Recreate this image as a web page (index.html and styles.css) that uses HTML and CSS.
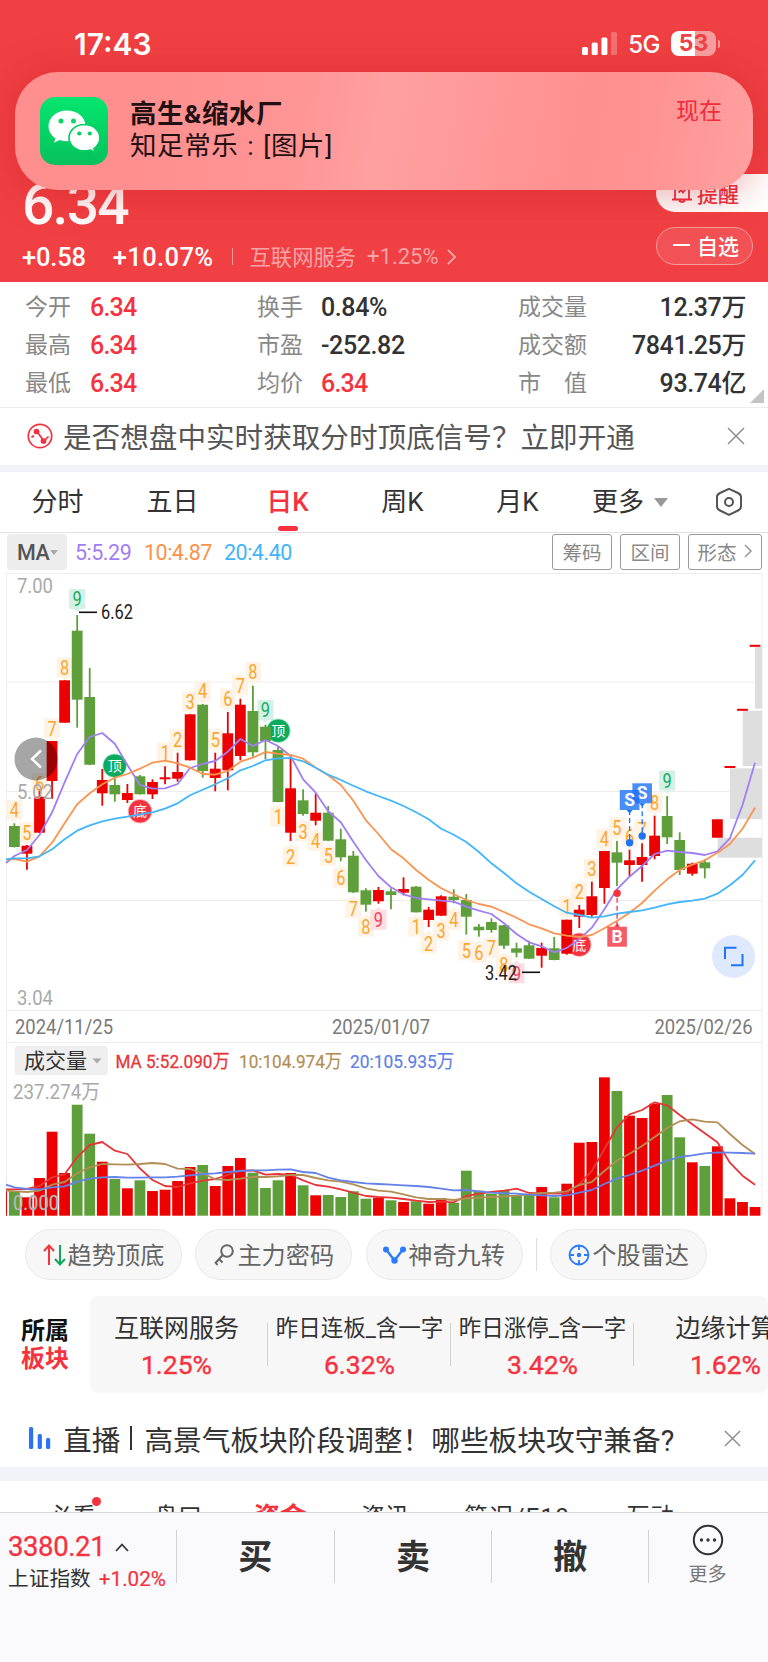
FILE: index.html
```html
<!DOCTYPE html>
<html lang="zh-CN">
<head>
<meta charset="utf-8">
<title>行情</title>
<link rel="stylesheet" href="styles.css">
</head>
<body>
<div class="page">
  <header class="top">
    <div class="status">
      <span class="clock">17:43</span>
      <span class="status-right">
        <svg class="signal" width="36" height="23" viewBox="0 0 36 23"><g fill="#fff"><rect x="0" y="15" width="6" height="8" rx="1.6"/><rect x="9.7" y="10.5" width="6" height="12.5" rx="1.6"/><rect x="19.4" y="5.5" width="6" height="17.5" rx="1.6"/><rect x="29" y="0" width="6" height="23" rx="1.6" opacity=".25"/></g></svg>
        <span class="net">5G</span>
        <span class="battery"><span class="b1">5</span><span class="b2">3</span></span><i class="cap"></i>
      </span>
    </div>
    <div class="quote">
      <div class="quote-main">
        <div class="price">6.34</div>
        <div class="change"><b>+0.58</b><b class="pct">+10.07%</b><i></i><span class="ind">互联网服务</span><span class="ind-pct">+1.25%</span>
          <svg width="10" height="16" viewBox="0 0 10 16" fill="none" stroke="#f8a3a5" stroke-width="1.8"><path d="M1 1l7 7-7 7"/></svg></div>
      </div>
      <div class="quote-btns">
        <div class="remind"><svg width="22" height="22" viewBox="0 0 22 22" fill="none" stroke="#ea2f3f" stroke-width="1.8"><path d="M1 17.5h20M4 17V9.500a7 7 0 0 1 14 0V17M8 18.500q3 3 6 0M7.500 10.500l2.500-2.500 2 2.500 3-4"/></svg>提醒</div>
        <div class="fav"><i></i>自选</div>
      </div>
    </div>
    <div class="notice">
      <svg class="wx" width="68" height="68" viewBox="0 0 68 68"><defs><linearGradient id="wg" x2="0" y2="1"><stop stop-color="#03e66f"/><stop offset="1" stop-color="#07c15c"/></linearGradient></defs><rect width="68" height="68" rx="15" fill="url(#wg)"/>
        <path d="M27 13.500C16.500 13.500 8.500 20.500 8.500 29.300c0 5 2.700 9.200 7 12.100L13.800 45.800l6-2.700c2.300.8 4.700 1.200 7.200 1.200 10.300 0 18.500-6.800 18.500-15.400S37.300 13.500 27 13.500z" fill="#fff"/><circle cx="21" cy="24" r="2.500" fill="#05d667"/><circle cx="33.500" cy="24" r="2.500" fill="#05d667"/>
        <path d="M44.500 27.500c-8.700 0-15.500 5.900-15.500 13.200s6.800 13.200 15.500 13.200c2 0 3.900-.3 5.700-.9l5 2.500-1.300-3.900c3.700-2.500 6-6.400 6-10.900 0-7.300-6.700-13.200-15.400-13.200z" fill="#fff" stroke="#06cf63" stroke-width="1.700"/><circle cx="39.300" cy="36.500" r="2.100" fill="#06cf63"/><circle cx="49.800" cy="36.500" r="2.100" fill="#06cf63"/></svg>
      <div class="msg"><div class="msg-title">高生&amp;缩水厂</div><div class="msg-text">知足常乐 : [图片]</div></div>
      <div class="now">现在</div>
    </div>
  </header>

  <section class="stats">
    <span class="k">今开</span><span class="v red">6.34</span><span class="k">换手</span><span class="v">0.84%</span><span class="k">成交量</span><span class="v r">12.37万</span>
    <span class="k">最高</span><span class="v red">6.34</span><span class="k">市盈</span><span class="v">-252.82</span><span class="k">成交额</span><span class="v r">7841.25万</span>
    <span class="k">最低</span><span class="v red">6.34</span><span class="k">均价</span><span class="v red">6.34</span><span class="k">市　值</span><span class="v r">93.74亿</span>
    <i class="corner"></i>
  </section>

  <section class="promo">
    <svg class="promo-ic" width="26" height="26" viewBox="0 0 26 26" fill="none" stroke="#f2303f" stroke-width="1.700"><circle cx="13" cy="13" r="11.700"/><path d="M4.500 14.500l2.500-2M10.500 9l5.500 8M18 17l3.500-3.500"/><circle cx="9.500" cy="8.500" r="2" fill="#f2303f"/><circle cx="16.500" cy="18" r="2" fill="#f2303f"/></svg>
    <span class="promo-t">是否想盘中实时获取分时顶底信号？立即开通</span>
    <svg class="x" width="18" height="18" viewBox="0 0 18 18" stroke="#8d8d8d" stroke-width="1.500"><path d="M1 1l16 16M17 1L1 17"/></svg>
  </section>

  <nav class="tabs">
    <span>分时</span><span>五日</span><span class="on">日K</span><span>周K</span><span>月K</span>
    <span class="more">更多<i></i></span>
    <svg width="28" height="30" viewBox="0 0 28 30" fill="none" stroke="#555" stroke-width="2"><path d="M14 1.800L23 6q3 1.500 3 4v9.500q0 2.500-3 4L14 28 5 23.500q-3-1.500-3-4V10q0-2.500 3-4z"/><circle cx="14" cy="15" r="4"/></svg>
  </nav>

  <div class="ma">
    <span class="ma-sel">MA<i></i></span><span class="m5">5:5.29</span><span class="m10">10:4.87</span><span class="m20">20:4.40</span>
    <span class="btns"><span class="btn">筹码</span><span class="btn">区间</span><span class="btn w">形态<svg width="9" height="14" viewBox="0 0 9 14" fill="none" stroke="#999" stroke-width="1.500"><path d="M1 1l6 6-6 6"/></svg></span></span>
  </div>

  <svg id="chart" class="chart" width="768" height="647" viewBox="0 570 768 647"></svg>

  <div class="tools">
    <span class="pill"><svg width="23" height="24" viewBox="0 0 23 24" fill="none" stroke-width="2"><path d="M6 22V3M1 8l5-5.500L11 8" stroke="#f5333f"/><path d="M17 2v19M12 16l5 5.500 5-5.500" stroke="#12a85c"/></svg><span>趋势顶底</span></span>
    <span class="pill"><svg width="22" height="24" viewBox="0 0 22 24" fill="none" stroke="#666" stroke-width="2"><circle cx="14" cy="8" r="5.800"/><path d="M9.800 12L2 20.500M6 16l3.500 3.500M2.500 19.500l2 2.500"/></svg><span>主力密码</span></span>
    <span class="pill"><svg width="23" height="24" viewBox="0 0 23 24" fill="none" stroke="#2b7bff" stroke-width="2.300"><path d="M3.500 7l8 10.500 8-10.500"/><g fill="#2b7bff" stroke="none"><circle cx="3" cy="6.500" r="3"/><circle cx="20" cy="6.500" r="3"/><circle cx="11.500" cy="17.500" r="3.200"/></g></svg><span>神奇九转</span></span>
    <i></i>
    <span class="pill"><svg width="22" height="24" viewBox="0 0 22 24" fill="none" stroke="#2b7bff" stroke-width="1.800"><circle cx="11" cy="12" r="9.500"/><path d="M11 2v5M11 17v5M1 12h5M16 12h5"/><circle cx="11" cy="12" r="1.300" fill="#2b7bff"/></svg><span>个股雷达</span></span>
  </div>

  <section class="sector">
    <div class="sector-t"><span>所属</span><span class="red">板块</span></div>
    <div class="cells"><div class="row">
      <div class="cell"><span>互联网服务</span><b>1.25%</b></div>
      <div class="cell sm"><span>昨日连板_含一字</span><b>6.32%</b></div>
      <div class="cell sm"><span>昨日涨停_含一字</span><b>3.42%</b></div>
      <div class="cell"><span>边缘计算</span><b>1.62%</b></div>
    </div></div>
  </section>

  <section class="live">
    <svg width="22" height="22" viewBox="0 0 22 22" fill="#2b72f6"><rect x="0" y="0" width="4.200" height="22" rx="1.500"/><rect x="8.700" y="7" width="4.200" height="15" rx="1.500"/><rect x="17" y="11" width="4.200" height="11" rx="1.500"/></svg>
    <span class="live-t">直播<i></i>高景气板块阶段调整！哪些板块攻守兼备?</span>
    <svg class="x" width="17" height="17" viewBox="0 0 18 18" stroke="#8d8d8d" stroke-width="1.500"><path d="M1 1l16 16M17 1L1 17"/></svg>
  </section>

  <nav class="subtabs"><span class="dot">必看</span><span>盘口</span><span class="on">资金</span><span>资讯</span><span class="wide">简况/F10</span><span>互动</span></nav>

  <footer class="bar">
    <div class="index"><div class="idx-v">3380.21<svg width="14" height="9" viewBox="0 0 14 9" fill="none" stroke="#333" stroke-width="1.800"><path d="M1 8l6-6.500L13 8"/></svg></div><div class="idx-n">上证指数<b>+1.02%</b></div></div>
    <div class="act">买</div><div class="act">卖</div><div class="act">撤</div>
    <div class="moreb"><svg width="32" height="32" viewBox="0 0 32 32" fill="none" stroke="#333" stroke-width="2"><circle cx="16" cy="16" r="14.200"/><g fill="#333" stroke="none"><circle cx="9.500" cy="16" r="1.700"/><circle cx="16" cy="16" r="1.700"/><circle cx="22.500" cy="16" r="1.700"/></g></svg><span>更多</span></div>
  </footer>
</div>
<script src="chart.js"></script>
</body>
</html>
```
FILE: styles.css
```css
* { box-sizing: border-box; }
body { margin: 0; background: #fff; }
i { font-style: normal; display: block; flex: none; }
svg { display: block; flex: none; }
.page {
  width: 768px; height: 1662px; overflow: hidden; color: #333;
  font-family: Roboto, "Noto Sans CJK SC", sans-serif; white-space: nowrap;
  display: flex; flex-direction: column;
}
.page > * { flex: none; }
.red { color: #f5333f; }

.top { height: 282px; background: #f04043; color: #fff; position: relative; overflow: hidden; }
.status { height: 88px; display: flex; justify-content: space-between; padding: 0 48px 0 74px; font-family: Inter, sans-serif; position: relative; z-index: 1; }
.clock { font-size: 30px; font-weight: 600; line-height: 88px; letter-spacing: 0; }
.status-right { display: flex; align-items: center; height: 87px; }
.net { font-size: 24px; font-weight: 500; margin: 2px 11px 0 10px; letter-spacing: -0.5px; }
.battery { width: 45px; height: 25px; border-radius: 8px; display: flex; justify-content: center; font-size: 23px; font-weight: 700; line-height: 25px; color: #ee4145; background: linear-gradient(90deg, #fff 53%, #f69c9d 53%); }
.cap { width: 2px; height: 8px; margin-left: 2px; border-radius: 0 3px 3px 0; background: #f69c9d; }
.quote { display: flex; justify-content: space-between; height: 194px; }
.quote-main { padding: 87px 0 0 22px; }
.price { font-size: 57px; font-weight: 500; line-height: 60px; letter-spacing: -1.8px; }
.change { display: flex; align-items: center; height: 43px; }
.change b { font-weight: 500; font-size: 25.5px; letter-spacing: -0.2px; }
.change .pct { margin-left: 27px; letter-spacing: 0.4px; }
.change i { width: 1px; height: 17px; background: #f8989a; margin: 0 17px 0 18px; }
.ind { font-size: 21.3px; color: #f8a3a5; margin-top: -2px; }
.ind-pct { font-size: 22px; color: #f8a3a5; margin: -1px 8px 0 11px; }
.quote-btns { width: 112px; padding-top: 86px; font-size: 21px; font-weight: 500; }
.remind { height: 38px; background: #fff; color: #ea2f3f; border-radius: 19px 0 0 19px; display: flex; align-items: center; gap: 4px; padding-left: 15px; }
.fav { width: 97px; height: 38px; margin-top: 15px; border: 1px solid #f79a9c; border-radius: 19px; background: #f25255; display: flex; align-items: center; padding: 0 0 2px 16px; }
.fav i { width: 17px; height: 2px; background: #fff; margin-right: 7px; }
.notice {
  position: absolute; left: 15px; top: 72px; width: 738px; height: 118px; border-radius: 43px; display: flex; padding: 25px 31px 0 25px;
  background: linear-gradient(100deg, #ff8f8f 0 18%, #ff9595 38%, #ffa0a0 50%, #ff9898 63%, #ff9090 76%, #ff9292 84%, #ffa0a0 100%);
  box-shadow: 0 3px 42px rgba(195, 20, 25, .38); color: #221012;
}
.msg { margin-left: 22px; flex: 1; font-size: 26.500px; }
.msg-title { font-weight: 700; line-height: 32px; margin-top: 1px; letter-spacing: 0.5px; }
.msg-text { line-height: 32px; letter-spacing: 0.600px; word-spacing: 1.800px; }
.now { color: #ec2d3e; font-size: 23px; line-height: 28px; margin-top: 1px; }

.stats { height: 126px; border-bottom: 1px solid #ececec; padding: 7px 22px 0 25px; display: grid; grid-template-columns: 65px 167px 64px 197px 85px 143px; grid-template-rows: repeat(3, 38px); align-items: center; position: relative; }
.k { font-size: 23px; color: #888; line-height: 36px; padding-bottom: 1px; }
.v { font-size: 25px; font-weight: 500; letter-spacing: -0.4px; line-height: 36px; }
.v.red { letter-spacing: -0.8px; }
.v.r { text-align: right; }
.corner { position: absolute; right: 4px; bottom: 4px; border-style: solid; border-width: 0 0 14px 14px; border-color: transparent transparent #c4c4c4 transparent; }

.promo { height: 57px; display: flex; align-items: center; padding: 0 23px 2px 27px; }
.promo-t { font-size: 28.600px; color: #555; margin-left: 10px; flex: 1; }
.tabs { border-top: 7px solid #f2f3f8; box-sizing: content-box; height: 60px; border-bottom: 1px solid #e2e2e2; display: grid; grid-template-columns: repeat(5, 115px) 118px 1fr; align-items: center; justify-items: center; font-size: 26px; }
.tabs > span { line-height: 60px; height: 60px; }
.tabs > svg { margin-right: 4px; }
.tabs .on { color: #f5333f; font-weight: 500; position: relative; }
.on::after { content: ""; position: absolute; left: 50%; bottom: 1px; width: 20px; height: 5px; margin-left: -10px; border-radius: 3px; background: #f5333f; }
.more { display: flex; align-items: center; gap: 10px; margin-right: 8px; }
.more i { border: 7px solid transparent; border-top: 9px solid #999; border-bottom: 0; }

.ma { height: 37px; padding: 1px 6px 0 7px; display: flex; align-items: center; font-size: 21.500px; letter-spacing: -0.5px; }
.ma-sel { width: 60px; height: 36px; border-radius: 4px; background: #ededed; color: #555; font-weight: 500; display: flex; align-items: center; padding-left: 10px; gap: 1px; margin-right: 8px; }
.ma-sel i { border: 4px solid transparent; border-top: 5px solid #aaa; border-bottom: 0; }
.m5 { color: #a27df2; width: 69px; } .m10 { color: #fa924a; width: 80px; } .m20 { color: #41b4fa; }
.btns { margin-left: auto; display: flex; gap: 8px; font-size: 19.500px; letter-spacing: 0; color: #888; }
.btn { width: 60px; height: 36px; border: 1px solid #999; border-radius: 3px; display: flex; align-items: center; justify-content: center; padding-bottom: 2px; }
.btn.w { width: 74px; gap: 7px; }

.chart { width: 768px; height: 647px; }
.chart text { font-family: Roboto, "Noto Sans CJK SC", sans-serif; }

.tools { height: 73px; padding: 12px 0 0 25px; display: flex; gap: 13.300px; font-size: 24.200px; color: #666; }
.pill { width: 157px; height: 51px; border: 1px solid #e9e9e9; border-radius: 26px; background: #f7f7f7; display: flex; align-items: center; justify-content: center; gap: 2px; }
.pill span { margin-top: -2px; }
.tools > i { width: 1px; height: 33px; background: #ddd; margin-top: 9px; }

.sector { height: 103px; display: flex; padding-top: 6px; }
.sector-t { width: 90px; padding: 21px 0 0 21px; font-size: 24px; font-weight: 700; color: #111; line-height: 28px; display: flex; flex-direction: column; }
.sector-t .red { color: #f5333f; }
.cells { width: 678px; height: 97px; background: #f7f7f7; border-radius: 8px; overflow: hidden; }
.row { display: flex; margin-left: -5px; }
.cell { flex: none; width: 183px; height: 97px; display: flex; flex-direction: column; align-items: center; font-size: 25px; padding-top: 14px; background: linear-gradient(#d2d2d2, #d2d2d2) right 27px / 1px 43px no-repeat; }
.cell span { height: 37px; line-height: 37px; }
.cell.sm span { font-size: 22.500px; }
.cell b { font-weight: 400; -webkit-text-stroke: .4px; color: #f5333f; font-size: 26.500px; line-height: 36px; }

.live { height: 74px; padding: 16px 27px 0 29px; display: flex; align-items: center; }
.live-t { flex: 1; font-size: 28.700px; margin-left: 12px; display: flex; align-items: center; }
.live-t i { width: 2px; height: 24px; background: #333; margin: 0 12px 0 10px; }
.subtabs { height: 45px; border-top: 14px solid #f2f3f8; overflow: hidden; display: grid; grid-template-columns: 108px 104px 100px 110px 154px 112px; padding: 19px 0 0 18px; font-size: 24px; line-height: 34px; }
.subtabs span { justify-self: center; position: relative; }
.subtabs .wide { letter-spacing: 1.300px; }
.subtabs .on { color: #f5333f; font-weight: 700; font-size: 26.500px; }
.subtabs .on::after { display: none; }
.dot::after { content: ""; position: absolute; right: -5px; top: -3px; width: 9px; height: 9px; border-radius: 50%; background: #f5333f; }
.bar { height: 150px; border-top: 1px solid #d8d8dc; background: #fafafc; display: flex; }
.index { width: 176px; padding: 16px 0 0 8px; }
.idx-v { display: flex; align-items: center; gap: 10px; font-size: 27.500px; line-height: 36px; color: #f5333f; letter-spacing: -0.4px; -webkit-text-stroke: .3px; }
.idx-n { font-size: 20.700px; line-height: 28px; display: flex; }
.idx-n b { font-weight: 400; color: #f5333f; margin-left: 8px; letter-spacing: 0; -webkit-text-stroke: .2px; }
.act { width: 157.700px; height: 53px; margin-top: 17px; border-left: 1px solid #d2d2d2; font-size: 34px; font-weight: 700; line-height: 54px; text-align: center; }
.act:nth-child(4) { border-right: 1px solid #d2d2d2; }
.moreb { width: 117px; padding-top: 11px; display: flex; flex-direction: column; align-items: center; font-size: 19px; color: #777; }
.moreb span { line-height: 28px; margin-top: 5px; }
```
FILE: chart.js
```js
const RED = '#ec0000', GREEN = '#5f9f3b';
const X = i => 14.4 + i * 12.553;

// [up, high, bodyTop, bodyBottom, low, volumeTop]
const bars = [
  [0,823.3,826,847,847.5,1191.7],[1,845,845.7,853.7,869.7,1197.3],[1,789,796.7,832.7,833,1178],[1,741,741,781,799,1131.7],
  [1,680.3,680.3,722.7,722.7,1173],[0,615,630.7,699.7,727.7,1104.7],[0,668,697,764.7,765,1133.7],[1,769,780,793.3,805.7,1161.7],
  [0,778,785,794.3,801.7,1179],[1,784,793,800,803,1188.3],[0,775,776.3,794.3,794.5,1180.3],[1,779.3,782,794.3,799,1191],
  [1,766.3,777.3,779.3,784.3,1189.7],[1,752.7,772,778.7,781.7,1181],[1,714.3,714.3,760.3,760.5,1167],[0,704,704.7,771,777.7,1165],
  [1,752.7,768.7,778,791.3,1186],[1,712,733.3,770.3,790.3,1166],[1,698.7,704.7,756,760.3,1158],[0,685.7,711,752.3,756.7,1172.7],
  [0,724.7,726.7,741,759.3,1188],[0,746.7,750,802,802.3,1180.3],[1,756.7,788.3,832.7,841,1173],[0,789.3,800.3,814,815.7,1185.3],
  [1,793.7,812.7,820.7,825.3,1195.3],[0,806,812.7,840.7,841,1195],[0,828.7,839.3,857.3,861.3,1197],[0,851,855.7,892.3,893,1191.3],
  [0,888.3,890.3,904.7,911.7,1198.7],[1,887,890,901.3,903.7,1198],[0,888.3,891.3,895,909.3,1200.3],[1,877.3,889,892.7,895.3,1202],
  [0,886,886.7,912.3,912.6,1201.3],[1,907,909.7,920,927,1203.7],[1,895.3,896.3,915.7,916,1198.3],[0,889.3,896.7,900,903.3,1202.7],
  [0,894,900,916.7,934.7,1170.7],[0,924,926.7,930.3,936.7,1190.7],[0,918.3,922,930,932.7,1193.7],[0,924.7,925.3,945.7,949,1191],
  [0,942.7,948.3,952.7,957.3,1195.3],[0,940.7,945.3,958.7,959,1194.3],[1,942.7,948,955.7,967.7,1187],[0,937,948.3,960,960.3,1197.3],
  [1,919.7,919.7,953.7,954.7,1183.7],[1,905,909.7,916.7,928,1142.7],[1,881.7,896.3,915,916.7,1142],[1,851,851,888,903.7,1077.3],
  [0,841,852.3,862.7,886,1091],[1,849.7,860.3,865,876,1115.7],[1,843.3,857,865,881.7,1118],[1,815.7,835.7,856,859.3,1103.7],
  [0,796,816,837.3,844,1095],[0,832.3,840,870,875,1137.3],[1,862.7,863.7,873.7,875.7,1162.3],[0,859.3,862.3,868.3,878.3,1166],
  [1,819.3,819.3,837.7,837.7,1146.3],[1,766,766,768,768,1198.3],[1,708.8,708.8,710.8,710.8,1202],[1,644.8,644.8,646.8,646.8,1207]
];

// Moving averages: first value sits on the left frame edge.
const priceMA = {
  '#a07ef5': [863,856,850,835,812.3,782.3,754,737,733,743.7,765,785,788.7,788.3,784,768,764,761,751.7,739,746,740,746,756,779.3,792.7,811.3,822.3,841.7,860,876,887.3,894.3,898,899.3,900.7,901.7,906.7,910.7,914,923.3,934,942.3,946.3,952.3,948,939.3,927.7,909.3,889.3,876.7,866,854,850.7,852,853,855,851.3,838.3,805,762.7],
  '#fa9450': [859.3,859,861.7,856.3,842.7,823.3,804.3,793.3,784.3,777.7,774,768.7,762.7,760.7,763.3,767.7,774,774.7,771,761.7,757.7,752,753.7,755,758.7,767.7,775.3,785,800.7,820.3,834,849.3,858.3,870,879.7,888.3,894.3,900,904,906.7,912,917.7,924.3,928.3,933.3,935.7,937,935,928.3,921,912.7,903,890.7,879.3,870,864.7,860.3,852.7,844,828.7,807.7],
  '#43b6fb': [859.3,858.3,858.3,856.3,849.3,839.3,830.7,825.3,821.3,818.7,816.7,814.3,812.3,808.7,803.3,795.3,789.7,784.3,778.3,770.3,766,760.3,758.3,758,761.3,767.7,774.7,780,785.7,791.3,796,800.7,806,812.3,819.3,828.7,834.7,842,852,863.3,873,883.3,891.7,899,906.3,912.7,915,917.7,916.3,913.7,912,910.3,907.7,904.3,902,900.7,898.7,893.7,885.3,875,860.3]
};
const volumeMA = {
  '#e73537': [1189.3,1189.3,1189,1186,1177.3,1174.3,1157.3,1145,1142,1150.7,1154,1168.3,1180,1186,1187,1183.3,1180.7,1179,1175,1170.7,1170.3,1174.7,1174,1175,1180.3,1185,1186.7,1189.3,1192.7,1196,1197,1197.7,1199,1200.7,1202,1201.7,1202.3,1196,1193.7,1192,1190.7,1188.7,1193,1193.3,1193.7,1193.3,1184,1171,1149.3,1127.3,1114.3,1110,1102.3,1105.3,1115,1124.3,1133.3,1142.3,1162.7,1175.7,1184.7],
  '#b28e55': [1190.7,1191.3,1192,1190.7,1184.7,1182,1173.3,1167.3,1164,1164.3,1164.7,1164,1163,1164,1168.7,1169,1173.3,1179.3,1180,1178.7,1177,1177,1176.3,1175,1175,1178,1180.3,1181.7,1184.3,1188.3,1190.7,1191.7,1194.3,1197.3,1199,1199,1200,1198.3,1197.7,1197,1196.3,1195.7,1194.3,1193,1192.7,1191.3,1185,1182,1171,1160.7,1153.7,1146,1137,1128,1121.3,1119.3,1121.7,1122.3,1134,1145,1154],
  '#6482e8': [1184.7,1187.3,1189,1189.3,1187.3,1186.3,1181.7,1178.7,1177.3,1177,1177.7,1177.7,1177.3,1177.3,1176.7,1175.3,1174,1173.3,1172,1171,1170.3,1170.3,1169.7,1169.3,1172,1173,1177.7,1180.3,1182,1183.3,1184,1184.7,1185.3,1186,1187,1188.7,1190.3,1190,1191.3,1192.7,1193.3,1193.7,1194.7,1195.3,1196,1195.3,1192.7,1190,1184,1178.7,1175,1170.7,1165.7,1160.7,1157,1155.3,1153.3,1152.3,1152.7,1153,1153.7]
};

// [bar, digit, centre y, palette, pointer direction]
const counts = [
  [0,4,809.7],[1,5,832.3],[2,6,783.3],[3,7,728.3],[4,8,667.7],[5,9,599,'g'],
  [12,1,752.7],[13,2,739.3],[14,3,701.7],[15,4,691],[16,5,739.3],[17,6,698.7],[18,7,685.3],[19,8,672],[20,9,710,'g'],
  [21,1,816.7,'o',-1],[22,2,856.7,'o',-1],[23,3,831.3,'o',-1],[24,4,841,'o',-1],[25,5,855.7,'o',-1],[26,6,877.7,'o',-1],[27,7,908.3,'o',-1],[28,8,926.7,'o',-1],[29,9,919.7,'r',-1],
  [32,1,926.7,'o',-1],[33,2,943.3,'o',-1],[34,3,930.7,'o',-1],[35,4,919.7,'o',-1],[36,5,950.3,'o',-1],[37,6,952.7,'o',-1],[38,7,948,'o',-1],[39,8,965,'o',-1],[40,9,973.3,'r',-1],
  [44,1,906.3],[45,2,891.7],[46,3,868.7],[47,4,838.7],[48,5,827.3],[49,6,837],[50,7,830],[51,8,802.3],[52,9,780.5,'g']
];
const palette = { o: ['#fff3e6', '#faa62e'], g: ['#d3f1e4', '#14ab66'], r: ['#fddfe2', '#f5405a'] };

let out = '';
const rect = (x, y, w, h, fill, extra = '') => out += `<rect x="${x}" y="${y}" width="${w}" height="${h}" fill="${fill}" ${extra}/>`;
const line = (x1, y1, x2, y2, stroke, w = 1, extra = '') => out += `<path d="M${x1} ${y1}L${x2} ${y2}" stroke="${stroke}" stroke-width="${w}" ${extra}/>`;
const text = (x, y, s, size, fill, len, extra = '') => out += `<text x="${x}" y="${y}" font-size="${size}" fill="${fill}" ${len ? `textLength="${len}" lengthAdjust="spacingAndGlyphs"` : ''} ${extra}>${s}</text>`;
const plot = set => {
  for (const [colour, ys] of Object.entries(set)) {
    const d = ys.map((y, i) => `${i ? X(i - 1).toFixed(1) : 6} ${y}`).join('L');
    out += `<path d="M${d}" fill="none" stroke="${colour}" stroke-width="1.8" stroke-linejoin="round"/>`;
  }
};
const badge = (x, y, s, fill) => {
  out += `<circle cx="${x}" cy="${y}" r="12.2" fill="${fill}" opacity=".35"/><circle cx="${x}" cy="${y}" r="11.3" fill="${fill}"/>`;
  text(x, y + 5, s, 14, '#fff', 0, 'text-anchor="middle"');
};

[573.5, 682, 791.5, 900.5, 1010.5, 1042.5].forEach(y => line(6, y, 762, y, '#ededed', 1.2));
line(6.5, 573, 6.5, 1216, '#ededed'); line(762, 573, 762, 1216, '#ededed');
rect(755, 646.7, 7, 62, '#dedede'); rect(742.7, 710.7, 19.3, 55.5, '#dedede');
rect(730, 768.3, 32, 50.7, '#dedede'); rect(717.7, 837.7, 44.3, 20, '#dedede');

counts.forEach(([i, n, y, p = 'o', dir = 1]) => {
  const [bg] = palette[p], x = X(i);
  rect(x - 8, y - 10, 16, 20, bg);
  out += `<path d="M${x - 3} ${y + dir * 10}h6l-3 ${dir * 3}z" fill="${bg}"/>`;
});
badge(114.7, 765.7, '顶', '#0aab5f');
badge(278.3, 730.7, '顶', '#0aab5f');
badge(140, 811.3, '底', '#f5333f');
badge(579.3, 944.7, '底', '#f5333f');
bars.forEach(([up, hi, a, b, lo, v], i) => {
  const c = up ? RED : GREEN, x = X(i);
  if (lo - hi > 2.5) line(x, hi, x, lo, c, 1.8);
  rect(x - 5.4, a, 10.8, b - a, c);
  rect(x - 5.4, v, 10.8, 1215.7 - v, c);
});
rect(6, 1189, 1, 26.7, RED);
counts.forEach(([i, n, y, p = 'o']) => text(X(i) - (n === 1 ? 4.3 : 4.6), y + 7.2, n, 20, palette[p][1], 9.2));
plot(priceMA);
plot(volumeMA);

line(79, 612.3, 97, 612.3, '#111', 1.6); text(101, 619.3, '6.62', 19.5, '#222', 32);
line(522, 972.3, 540, 972.3, '#111', 1.6); text(485, 979.6, '3.42', 19.5, '#222', 32);

const flag = (x, top, dotY, s, colour, dir) => {
  const edge = dir > 0 ? top + 20 : top;
  line(x, edge, x, dotY, colour, 1.3, 'stroke-dasharray="5 3"');
  out += `<circle cx="${x}" cy="${dotY}" r="3.7" fill="${colour}"/><path d="M${x - 3} ${edge}h6l-3 ${dir * 3.5}z" fill="${colour}"/>`;
  rect(x - 9.8, top, 19.6, 20, colour, 'opacity=".8"');
  text(x, top + 16, s, 17.5, '#fff', 0, 'text-anchor="middle" font-weight="700"');
};
flag(642.2, 783.3, 836, 'S', '#1d72f8', 1);
flag(629.6, 790, 842.7, 'S', '#1d72f8', 1);
flag(617.1, 926.7, 893.3, 'B', '#f5333f', -1);

const grey = '#a9a9a9';
text(17, 592.8, '7.00', 20.5, grey, 36);
text(17, 798.8, '5.02', 20.5, grey, 36);
text(17, 1005.3, '3.04', 20.5, grey, 36);
text(15, 1034, '2024/11/25', 20, '#7a7a7a', 98);
text(332, 1034, '2025/01/07', 20, '#7a7a7a', 98);
text(654.500, 1034, '2025/02/26', 20, '#7a7a7a', 98);
rect(14.7, 1046, 93, 29, '#efefef', 'rx="3"');
text(24, 1067.500, '成交量', 21, '#333', 63);
out += `<path d="M92.500 1058.500h9l-4.500 5z" fill="#aaa"/>`;
text(115.500, 1068, 'MA 5:52.090万', 19, '#e73537', 114, 'stroke="#e73537" stroke-width=".3"');
text(239, 1068, '10:104.974万', 19, '#b28e55', 103, 'stroke="#b28e55" stroke-width=".2"');
text(350, 1068, '20:105.935万', 19, '#5f7fe6', 104, 'stroke="#5f7fe6" stroke-width=".2"');
text(13, 1099, '237.274万', 20, grey, 87);
text(13, 1209.500, '0.000', 19.5, '#c3c3c3', 46, 'stroke="#999" stroke-width=".4"');

out += `<circle cx="36" cy="759" r="21.500" fill="#000" opacity=".35"/><path d="M41 750.500l-9 8.500 9 8.500" fill="none" stroke="#fff" stroke-width="2.500"/>`;
out += `<circle cx="733.500" cy="956.500" r="21.500" fill="#dfe9fd"/><path d="M725 959v-11.300h11.500M731 965.300h11.500v-11.300" fill="none" stroke="#2173f8" stroke-width="2"/>`;
document.getElementById('chart').innerHTML = out;
```
